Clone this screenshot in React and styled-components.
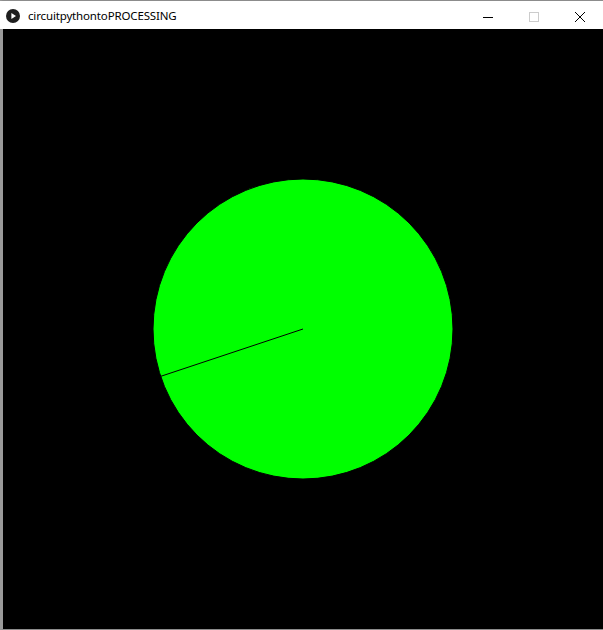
import styled, { createGlobalStyle } from 'styled-components'

const Global = createGlobalStyle`
  html, body {
    margin: 0;
    padding: 0;
    background: #fff;
  }
`

const CANVAS = 600
const DIAMETER = 300
const HAND_ANGLE = 161.6 // degrees, measured from +x clockwise (screen coords)

const Window = styled.div`
  width: 603px;
  height: 630px;
  box-sizing: border-box;
  border-top: 1px solid #8c8c8c;
  border-bottom: 1px solid #8c8c8c;
  border-left: 3px solid #9a9a9a;
  display: flex;
  flex-direction: column;
  background: #fff;
`

const TitleBar = styled.div`
  height: 28px;
  display: flex;
  align-items: center;
  background: #fff;
  margin-left: -3px;
  padding-left: 6px;
`

const AppIcon = styled.svg`
  width: 14px;
  height: 14px;
  margin-top: 2px;
  flex: none;
`

const Title = styled.span`
  font-family: "Noto Sans", "Open Sans", sans-serif;
  font-size: 11.5px;
  letter-spacing: -0.15px;
  color: #000;
  margin-left: 8px;
  margin-top: 1px;
  white-space: nowrap;
`

const Controls = styled.div`
  margin-left: auto;
  display: flex;
  height: 100%;
`

const ControlButton = styled.div`
  width: 46px;
  height: 100%;
  display: flex;
  align-items: center;
  justify-content: center;
  margin-top: 2px;
`

const Canvas = styled.svg`
  display: block;
  width: ${CANVAS}px;
  height: ${CANVAS}px;
  background: #000;
`

const Sketch = () => {
  const c = CANVAS / 2
  const r = DIAMETER / 2
  const a = (HAND_ANGLE * Math.PI) / 180
  const x2 = c + r * Math.cos(a)
  const y2 = c + r * Math.sin(a)
  return (
    <Canvas viewBox={`0 0 ${CANVAS} ${CANVAS}`}>
      <circle cx={c} cy={c} r={r} fill="#00ff00" stroke="#000" strokeWidth="1" />
      <line x1={c} y1={c} x2={x2} y2={y2} stroke="#000" strokeWidth="1" />
    </Canvas>
  )
}

const App = () => (
  <>
    <Global />
    <Window>
      <TitleBar>
        <AppIcon viewBox="0 0 14 14">
          <circle cx="7" cy="7" r="7" fill="#1e1e1e" />
          <path d="M5.4 4 L10 7 L5.4 10 Z" fill="#fff" />
        </AppIcon>
        <Title>circuitpythontoPROCESSING</Title>
        <Controls>
          <ControlButton>
            <svg width="10" height="10" viewBox="0 0 10 10">
              <line x1="0" y1="5.5" x2="10" y2="5.5" stroke="#000" strokeWidth="1" />
            </svg>
          </ControlButton>
          <ControlButton>
            <svg width="10" height="10" viewBox="0 0 10 10">
              <rect x="0.5" y="0.5" width="9" height="9" fill="none" stroke="#cccccc" strokeWidth="1" />
            </svg>
          </ControlButton>
          <ControlButton>
            <svg width="10" height="10" viewBox="0 0 10 10">
              <path d="M0 0 L10 10 M10 0 L0 10" stroke="#000" strokeWidth="1" />
            </svg>
          </ControlButton>
        </Controls>
      </TitleBar>
      <Sketch />
    </Window>
  </>
)

export default App
